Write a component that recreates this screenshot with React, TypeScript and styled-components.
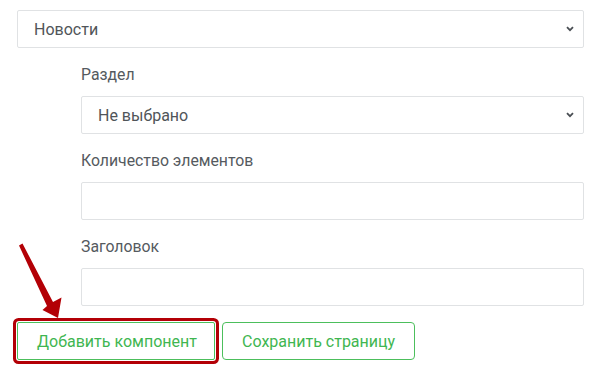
import React from "react";
import styled, { createGlobalStyle } from "styled-components";

const GlobalStyle = createGlobalStyle`
  html, body {
    margin: 0;
    padding: 0;
    background: #ffffff;
  }
  body {
    font-family: Roboto, "Noto Sans", Arial, sans-serif;
  }
`;

const Page = styled.div`
  position: relative;
  width: 601px;
  height: 371px;
  padding: 10px 17px 0 17px;
  box-sizing: border-box;
  overflow: hidden;
`;

const Nested = styled.div`
  padding-left: 64px;
`;

const Field = styled.div`
  margin-top: 16px;
`;

const Label = styled.div`
  font-size: 15.8px;
  line-height: 22px;
  color: #555a60;
  margin-bottom: 10px;
`;

const SelectWrap = styled.div`
  position: relative;
`;

const Select = styled.select`
  appearance: none;
  -webkit-appearance: none;
  width: 100%;
  height: 38px;
  box-sizing: border-box;
  border: 1px solid #e0e2e4;
  border-radius: 2px;
  background: #fff;
  padding: 0 30px 0 16px;
  font-family: Roboto, "Noto Sans", Arial, sans-serif;
  font-size: 16px;
  color: #505559;
  outline: none;
`;

const Chevron = styled.svg`
  position: absolute;
  right: 10px;
  top: 16px;
  pointer-events: none;
`;

const Input = styled.input`
  display: block;
  width: 100%;
  height: 38px;
  box-sizing: border-box;
  border: 1px solid #e0e2e4;
  border-radius: 2px;
  background: #fff;
  padding: 0 14px;
  font-size: 16px;
  outline: none;
`;

const Buttons = styled.div`
  display: flex;
  align-items: center;
  gap: 7px;
  margin-top: 16px;
`;

const Button = styled.button<{ $marked?: boolean }>`
  height: 38px;
  box-sizing: border-box;
  border: 1px solid #4cbf5c;
  border-radius: 4px;
  background: #fff;
  color: #3fb651;
  font-family: Roboto, "Noto Sans", Arial, sans-serif;
  font-size: 16px;
  white-space: nowrap;
  padding: 0 ${(p) => (p.$marked ? "19px" : "19px")};
  cursor: pointer;
  ${(p) =>
    p.$marked &&
    `
    box-shadow: 0 0 0 1px #fff, 0 0 0 4px #b30006;
    border-radius: 2px;
    width: 198px;
  `}
`;

const Arrow = styled.svg`
  position: absolute;
  left: 0;
  top: 230px;
  pointer-events: none;
`;

const ChevronIcon = () => (
  <Chevron width="8" height="6" viewBox="0 0 8 6">
    <path d="M1 1.2 L4 4.2 L7 1.2" fill="none" stroke="#4a4f54" strokeWidth="1.8" />
  </Chevron>
);

const App: React.FC = () => {
  return (
    <>
      <GlobalStyle />
      <Page>
        <SelectWrap>
          <Select defaultValue="news">
            <option value="news">Новости</option>
          </Select>
          <ChevronIcon />
        </SelectWrap>
        <Nested>
          <Field>
            <Label>Раздел</Label>
            <SelectWrap>
              <Select defaultValue="none">
                <option value="none">Не выбрано</option>
              </Select>
              <ChevronIcon />
            </SelectWrap>
          </Field>
          <Field>
            <Label>Количество элементов</Label>
            <Input />
          </Field>
          <Field>
            <Label>Заголовок</Label>
            <Input />
          </Field>
        </Nested>
        <Buttons>
          <Button $marked>Добавить компонент</Button>
          <Button>Сохранить страницу</Button>
        </Buttons>
        <Arrow width="80" height="100" viewBox="0 0 80 100">
          <path d="M19 15.5 L22.5 13.5 L53 72 L61.5 67.5 L58 88 L42.5 80 L47 76 Z" fill="#b30006" />
        </Arrow>
      </Page>
    </>
  );
};

export default App;
